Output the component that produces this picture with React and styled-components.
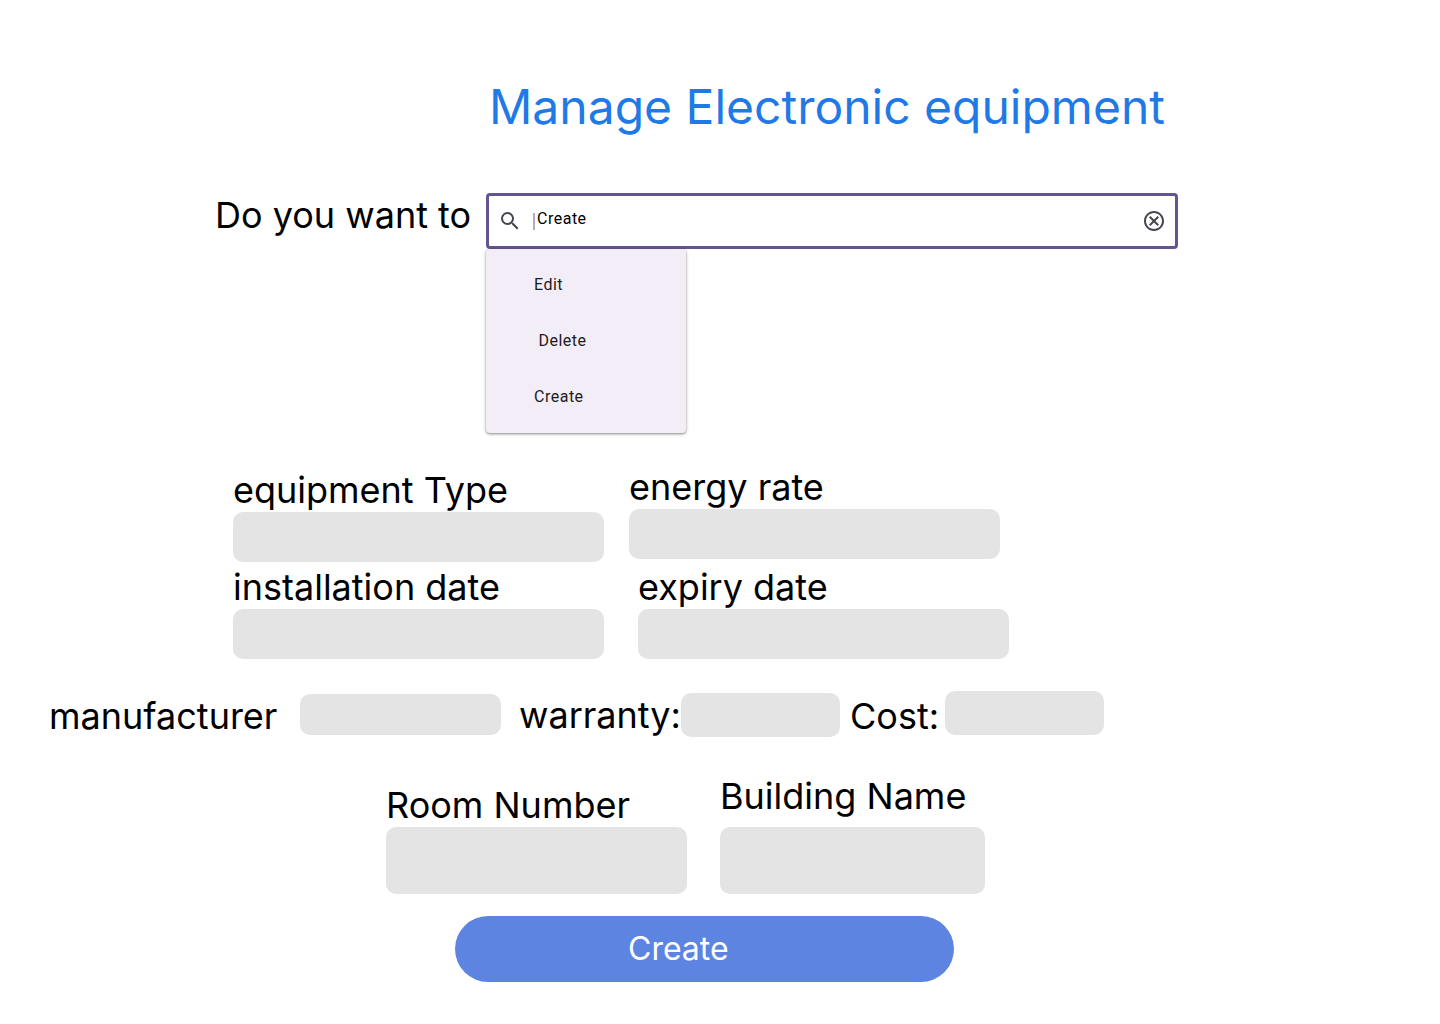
import React, { useState } from "react";
import styled, { createGlobalStyle } from "styled-components";

const GlobalStyle = createGlobalStyle`
  *, *::before, *::after { box-sizing: border-box; }
  body {
    margin: 0;
    background: #fff;
    color: #000;
    font-family: Inter, "Liberation Sans", sans-serif;
  }
`;

const Page = styled.main`
  max-width: 1440px;
  margin: 0 auto;
  padding: 78px 40px 42px 49px;
`;

const Title = styled.h1`
  margin: 0 0 57px;
  padding-left: 440px;
  color: #1f7ae8;
  font-size: 48px;
  font-weight: 400;
  line-height: 58px;
`;

const ActionRow = styled.div`
  display: flex;
  align-items: flex-start;
  padding: 0 222px 0 166px;
`;

const Label = styled.label`
  flex: none;
  font-size: 36px;
  line-height: 44px;
  white-space: nowrap;
`;

const ActionLabel = styled(Label)`
  width: 271px;
`;

const Combo = styled.div`
  position: relative;
  flex: 1;
  min-width: 240px;
`;

const SearchBox = styled.div`
  display: flex;
  align-items: center;
  height: 56px;
  padding: 0 9px;
  border: 3px solid #65558f;
  border-radius: 4px;
  background: #fff;
`;

const Caret = styled.span`
  flex: none;
  width: 2px;
  height: 17px;
  margin-left: 11px;
  background: #b2aac7;
`;

const SearchInput = styled.input`
  flex: 1;
  min-width: 0;
  height: 24px;
  margin-bottom: 4px;
  padding: 0 2px;
  border: 0;
  outline: 0;
  background: transparent;
  color: #000;
  font: 400 16px/24px Roboto, sans-serif;
  letter-spacing: 0.5px;
`;

const ClearButton = styled.button`
  display: flex;
  flex: none;
  padding: 0;
  border: 0;
  background: none;
  cursor: pointer;
`;

const Icon = styled.svg`
  display: block;
  flex: none;
  width: 24px;
  height: 24px;
  fill: #49454f;
`;

const Menu = styled.ul`
  position: absolute;
  top: 100%;
  left: 0;
  width: 200px;
  margin: 0;
  padding: 8px 0;
  list-style: none;
  border-radius: 4px;
  background: #f3edf7;
  box-shadow: 0 1px 2px rgba(0, 0, 0, 0.3), 0 1px 3px 1px rgba(0, 0, 0, 0.15);
`;

const MenuItem = styled.button`
  display: block;
  width: 100%;
  height: 56px;
  padding: 0 48px;
  border: 0;
  background: none;
  color: #1d1b20;
  font: 400 16px/24px Roboto, sans-serif;
  letter-spacing: 0.5px;
  text-align: left;
  white-space: pre;
  cursor: pointer;
`;

const DetailColumns = styled.div`
  display: flex;
  align-items: flex-end;
  gap: 25px;
  margin-top: 216px;
  padding-left: 184px;
`;

const Column = styled.div`
  display: flex;
  flex: 0 1 ${(p) => p.$width}px;
  flex-direction: column;
  gap: ${(p) => p.$gap}px;
`;

const Field = styled.div`
  display: flex;
  flex: 0 1 ${(p) => p.$width || "auto"};
  flex-direction: column;
  gap: ${(p) => p.$gap || 0}px;
`;

const ColumnField = styled(Field)`
  flex: none;
  width: 371px;
  max-width: 100%;
  align-self: ${(p) => p.$align || "flex-start"};
`;

const TextInput = styled.input`
  width: ${(p) => p.$width || "100%"};
  height: ${(p) => p.$height}px;
  min-width: 0;
  padding: 0 12px;
  border: 0;
  border-radius: 10px;
  background: #e4e4e4;
  color: #000;
  font: 400 20px/24px Inter, sans-serif;
`;

const InlineRow = styled.div`
  display: flex;
  min-height: 47px;
  margin-top: 32px;
`;

const InlineField = styled.div`
  display: flex;
  align-self: ${(p) => p.$align};
  align-items: flex-start;
  margin-right: ${(p) => p.$after || 0}px;

  ${Label} {
    align-self: flex-end;
    width: ${(p) => p.$label}px;
  }
`;

const LocationRow = styled.div`
  display: flex;
  align-items: flex-end;
  gap: 33px;
  margin-top: 36px;
  padding-left: 337px;
`;

const SubmitButton = styled.button`
  display: block;
  width: 499px;
  max-width: 100%;
  height: 66px;
  margin: 22px 0 0 406px;
  padding: 0 173px;
  border: 0;
  border-radius: 33px;
  background: #5d84e1;
  color: #fff;
  font: 400 32px/40px Inter, sans-serif;
  text-align: left;
  cursor: pointer;
`;

const OPTIONS = [
  { value: "Edit", text: "Edit" },
  { value: "Delete", text: " Delete" },
  { value: "Create", text: "Create" },
];

export default function App() {
  const [action, setAction] = useState("Create");

  return (
    <Page>
      <GlobalStyle />
      <Title>Manage Electronic equipment</Title>
      <form onSubmit={(e) => e.preventDefault()}>
        <ActionRow>
          <ActionLabel htmlFor="action">Do you want to</ActionLabel>
          <Combo>
            <SearchBox>
              <Icon viewBox="0 0 24 24" aria-hidden="true">
                <path d="M15.5 14h-.79l-.28-.27A6.47 6.47 0 0 0 16 9.5 6.5 6.5 0 1 0 9.5 16c1.61 0 3.09-.59 4.23-1.57l.27.28v.79l5 4.99L20.49 19l-4.99-5zm-6 0C7.01 14 5 11.99 5 9.5S7.01 5 9.5 5 14 7.01 14 9.5 11.99 14 9.5 14z" />
              </Icon>
              <Caret />
              <SearchInput
                id="action"
                value={action}
                onChange={(e) => setAction(e.target.value)}
              />
              <ClearButton type="button" aria-label="Clear" onClick={() => setAction("")}>
                <Icon viewBox="0 0 24 24" aria-hidden="true">
                  <path d="M8.4 17 12 13.4 15.6 17 17 15.6 13.4 12 17 8.4 15.6 7 12 10.6 8.4 7 7 8.4 10.6 12 7 15.6 8.4 17zM12 2C6.47 2 2 6.47 2 12s4.47 10 10 10 10-4.47 10-10S17.53 2 12 2zm0 18c-4.41 0-8-3.59-8-8s3.59-8 8-8 8 3.59 8 8-3.59 8-8 8z" />
                </Icon>
              </ClearButton>
            </SearchBox>
            <Menu>
              {OPTIONS.map((option) => (
                <li key={option.value}>
                  <MenuItem type="button" onClick={() => setAction(option.value)}>
                    {option.text}
                  </MenuItem>
                </li>
              ))}
            </Menu>
          </Combo>
        </ActionRow>

        <DetailColumns>
          <Column $width={371} $gap={3}>
            <ColumnField>
              <Label htmlFor="type">equipment Type</Label>
              <TextInput id="type" $height={50} />
            </ColumnField>
            <ColumnField>
              <Label htmlFor="installed">installation date</Label>
              <TextInput id="installed" $height={50} />
            </ColumnField>
          </Column>
          <Column $width={380} $gap={6}>
            <ColumnField>
              <Label htmlFor="rate">energy rate</Label>
              <TextInput id="rate" $height={50} />
            </ColumnField>
            <ColumnField $align="flex-end">
              <Label htmlFor="expiry">expiry date</Label>
              <TextInput id="expiry" $height={50} />
            </ColumnField>
          </Column>
        </DetailColumns>

        <InlineRow>
          <InlineField $align="flex-end" $label={251} $after={18}>
            <Label htmlFor="manufacturer">manufacturer</Label>
            <TextInput id="manufacturer" $width="201px" $height={41} />
          </InlineField>
          <InlineField $align="center" $label={162} $after={10}>
            <Label htmlFor="warranty">warranty:</Label>
            <TextInput id="warranty" $width="159px" $height={44} />
          </InlineField>
          <InlineField $align="stretch" $label={95}>
            <Label htmlFor="cost">Cost:</Label>
            <TextInput id="cost" $width="159px" $height={44} />
          </InlineField>
        </InlineRow>

        <LocationRow>
          <Field $width="301px">
            <Label htmlFor="room">Room Number</Label>
            <TextInput id="room" $height={67} />
          </Field>
          <Field $width="265px" $gap={9}>
            <Label htmlFor="building">Building Name</Label>
            <TextInput id="building" $height={67} />
          </Field>
        </LocationRow>

        <SubmitButton type="submit">Create</SubmitButton>
      </form>
    </Page>
  );
}
